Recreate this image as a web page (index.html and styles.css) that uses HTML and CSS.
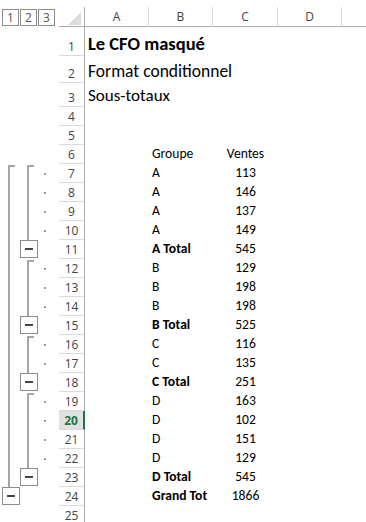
FILE: index.html
```html
<!DOCTYPE html>
<html lang="fr">
<head>
    <meta charset="UTF-8" />
    <title>Sous-totaux</title>
    <link rel="stylesheet" href="styles.css">
</head>
<body>

    <div class="sheet">
        <div class="header">
            <div class="levels">
                <span class="level">1</span>
                <span class="level">2</span>
                <span class="level">3</span>
            </div>
            <div class="corner"><i class="corner-mark"></i></div>
            <div class="colhead">A</div>
            <div class="colhead">B</div>
            <div class="colhead">C</div>
            <div class="colhead">D</div>
            <div class="colhead last"></div>
        </div>

        <div class="row row-1">
            <div class="gutter"></div>
            <div class="rowhead">1</div>
            <div class="cell title">Le CFO masqué</div>
            <div class="cell"></div><div class="cell"></div><div class="cell"></div><div class="cell"></div>
        </div>
        <div class="row row-2">
            <div class="gutter"></div>
            <div class="rowhead">2</div>
            <div class="cell subtitle">Format conditionnel</div>
            <div class="cell"></div><div class="cell"></div><div class="cell"></div><div class="cell"></div>
        </div>
        <div class="row row-3">
            <div class="gutter"></div>
            <div class="rowhead">3</div>
            <div class="cell caption">Sous-totaux</div>
            <div class="cell"></div><div class="cell"></div><div class="cell"></div><div class="cell"></div>
        </div>
        <div class="row">
            <div class="gutter"></div>
            <div class="rowhead">4</div>
            <div class="cell"></div><div class="cell"></div><div class="cell"></div><div class="cell"></div><div class="cell"></div>
        </div>
        <div class="row">
            <div class="gutter"></div>
            <div class="rowhead">5</div>
            <div class="cell"></div><div class="cell"></div><div class="cell"></div><div class="cell"></div><div class="cell"></div>
        </div>
        <div class="row">
            <div class="gutter"></div>
            <div class="rowhead">6</div>
            <div class="cell"></div>
            <div class="cell">Groupe</div>
            <div class="cell num">Ventes</div>
            <div class="cell"></div><div class="cell"></div>
        </div>

        <!-- groupe A -->
        <div class="row">
            <div class="gutter">
                <div class="lane"><i class="bracket"></i></div>
                <div class="lane lane-2"><i class="bracket"></i></div>
                <div class="lane"><i class="dot"></i></div>
            </div>
            <div class="rowhead">7</div>
            <div class="cell"></div>
            <div class="cell">A</div>
            <div class="cell num">113</div>
            <div class="cell"></div><div class="cell"></div>
        </div>
        <div class="row">
            <div class="gutter">
                <div class="lane"><i class="line"></i></div>
                <div class="lane lane-2"><i class="line"></i></div>
                <div class="lane"><i class="dot"></i></div>
            </div>
            <div class="rowhead">8</div>
            <div class="cell"></div>
            <div class="cell">A</div>
            <div class="cell num">146</div>
            <div class="cell"></div><div class="cell"></div>
        </div>
        <div class="row">
            <div class="gutter">
                <div class="lane"><i class="line"></i></div>
                <div class="lane lane-2"><i class="line"></i></div>
                <div class="lane"><i class="dot"></i></div>
            </div>
            <div class="rowhead">9</div>
            <div class="cell"></div>
            <div class="cell">A</div>
            <div class="cell num">137</div>
            <div class="cell"></div><div class="cell"></div>
        </div>
        <div class="row">
            <div class="gutter">
                <div class="lane"><i class="line"></i></div>
                <div class="lane lane-2"><i class="line"></i></div>
                <div class="lane"><i class="dot"></i></div>
            </div>
            <div class="rowhead">10</div>
            <div class="cell"></div>
            <div class="cell">A</div>
            <div class="cell num">149</div>
            <div class="cell"></div><div class="cell"></div>
        </div>
        <div class="row">
            <div class="gutter">
                <div class="lane"><i class="line"></i></div>
                <div class="lane lane-2"><i class="toggle"></i></div>
                <div class="lane"></div>
            </div>
            <div class="rowhead">11</div>
            <div class="cell"></div>
            <div class="cell total">A Total</div>
            <div class="cell num">545</div>
            <div class="cell"></div><div class="cell"></div>
        </div>

        <!-- groupe B -->
        <div class="row">
            <div class="gutter">
                <div class="lane"><i class="line"></i></div>
                <div class="lane lane-2"><i class="bracket"></i></div>
                <div class="lane"><i class="dot"></i></div>
            </div>
            <div class="rowhead">12</div>
            <div class="cell"></div>
            <div class="cell">B</div>
            <div class="cell num">129</div>
            <div class="cell"></div><div class="cell"></div>
        </div>
        <div class="row">
            <div class="gutter">
                <div class="lane"><i class="line"></i></div>
                <div class="lane lane-2"><i class="line"></i></div>
                <div class="lane"><i class="dot"></i></div>
            </div>
            <div class="rowhead">13</div>
            <div class="cell"></div>
            <div class="cell">B</div>
            <div class="cell num">198</div>
            <div class="cell"></div><div class="cell"></div>
        </div>
        <div class="row">
            <div class="gutter">
                <div class="lane"><i class="line"></i></div>
                <div class="lane lane-2"><i class="line"></i></div>
                <div class="lane"><i class="dot"></i></div>
            </div>
            <div class="rowhead">14</div>
            <div class="cell"></div>
            <div class="cell">B</div>
            <div class="cell num">198</div>
            <div class="cell"></div><div class="cell"></div>
        </div>
        <div class="row">
            <div class="gutter">
                <div class="lane"><i class="line"></i></div>
                <div class="lane lane-2"><i class="toggle"></i></div>
                <div class="lane"></div>
            </div>
            <div class="rowhead">15</div>
            <div class="cell"></div>
            <div class="cell total">B Total</div>
            <div class="cell num">525</div>
            <div class="cell"></div><div class="cell"></div>
        </div>

        <!-- groupe C -->
        <div class="row">
            <div class="gutter">
                <div class="lane"><i class="line"></i></div>
                <div class="lane lane-2"><i class="bracket"></i></div>
                <div class="lane"><i class="dot"></i></div>
            </div>
            <div class="rowhead">16</div>
            <div class="cell"></div>
            <div class="cell">C</div>
            <div class="cell num">116</div>
            <div class="cell"></div><div class="cell"></div>
        </div>
        <div class="row">
            <div class="gutter">
                <div class="lane"><i class="line"></i></div>
                <div class="lane lane-2"><i class="line"></i></div>
                <div class="lane"><i class="dot"></i></div>
            </div>
            <div class="rowhead">17</div>
            <div class="cell"></div>
            <div class="cell">C</div>
            <div class="cell num">135</div>
            <div class="cell"></div><div class="cell"></div>
        </div>
        <div class="row">
            <div class="gutter">
                <div class="lane"><i class="line"></i></div>
                <div class="lane lane-2"><i class="toggle"></i></div>
                <div class="lane"></div>
            </div>
            <div class="rowhead">18</div>
            <div class="cell"></div>
            <div class="cell total">C Total</div>
            <div class="cell num">251</div>
            <div class="cell"></div><div class="cell"></div>
        </div>

        <!-- groupe D -->
        <div class="row">
            <div class="gutter">
                <div class="lane"><i class="line"></i></div>
                <div class="lane lane-2"><i class="bracket"></i></div>
                <div class="lane"><i class="dot"></i></div>
            </div>
            <div class="rowhead">19</div>
            <div class="cell"></div>
            <div class="cell">D</div>
            <div class="cell num">163</div>
            <div class="cell"></div><div class="cell"></div>
        </div>
        <div class="row">
            <div class="gutter">
                <div class="lane"><i class="line"></i></div>
                <div class="lane lane-2"><i class="line"></i></div>
                <div class="lane"><i class="dot"></i></div>
            </div>
            <div class="rowhead selected">20</div>
            <div class="cell"></div>
            <div class="cell">D</div>
            <div class="cell num">102</div>
            <div class="cell"></div><div class="cell"></div>
        </div>
        <div class="row">
            <div class="gutter">
                <div class="lane"><i class="line"></i></div>
                <div class="lane lane-2"><i class="line"></i></div>
                <div class="lane"><i class="dot"></i></div>
            </div>
            <div class="rowhead">21</div>
            <div class="cell"></div>
            <div class="cell">D</div>
            <div class="cell num">151</div>
            <div class="cell"></div><div class="cell"></div>
        </div>
        <div class="row">
            <div class="gutter">
                <div class="lane"><i class="line"></i></div>
                <div class="lane lane-2"><i class="line"></i></div>
                <div class="lane"><i class="dot"></i></div>
            </div>
            <div class="rowhead">22</div>
            <div class="cell"></div>
            <div class="cell">D</div>
            <div class="cell num">129</div>
            <div class="cell"></div><div class="cell"></div>
        </div>
        <div class="row">
            <div class="gutter">
                <div class="lane"><i class="line"></i></div>
                <div class="lane lane-2"><i class="toggle"></i></div>
                <div class="lane"></div>
            </div>
            <div class="rowhead">23</div>
            <div class="cell"></div>
            <div class="cell total">D Total</div>
            <div class="cell num">545</div>
            <div class="cell"></div><div class="cell"></div>
        </div>

        <div class="row">
            <div class="gutter">
                <div class="lane"><i class="toggle"></i></div>
                <div class="lane lane-2"></div>
                <div class="lane"></div>
            </div>
            <div class="rowhead">24</div>
            <div class="cell"></div>
            <div class="cell total">Grand Tot</div>
            <div class="cell num">1866</div>
            <div class="cell"></div><div class="cell"></div>
        </div>
        <div class="row">
            <div class="gutter"></div>
            <div class="rowhead">25</div>
            <div class="cell"></div><div class="cell"></div><div class="cell"></div><div class="cell"></div><div class="cell"></div>
        </div>
    </div>

</body>
</html>
```

FILE: styles.css
```css
body {
    margin: 0;
    background-color: #fff;
    color: #000;
    font-family: Calibri, Lato, "Liberation Sans", sans-serif;
    overflow: hidden;
}

.header,
.row {
    display: grid;
    grid-template-columns: 59px 26px 64px 64px 65px 64px 1fr;
}

/* top strip: outline levels, corner, column letters */
.header {
    height: 27px;
}

.levels {
    display: flex;
    align-items: flex-end;
    gap: 1px;
    padding: 0 0 1px 2px;
}

.level {
    box-sizing: border-box;
    width: 17px;
    height: 17px;
    border: 1px solid #8c8c8c;
    font-family: "Open Sans", "Noto Sans", sans-serif;
    font-size: 12px;
    line-height: 15px;
    text-align: center;
    color: #555;
}

.corner {
    display: flex;
    justify-content: flex-end;
    align-items: flex-end;
    margin-top: 7px;
    padding: 0 3px 1px 0;
    border-right: 1px solid #ababab;
    border-bottom: 1px solid #ababab;
}

.corner-mark {
    width: 13px;
    height: 13px;
    background: #dcdcdc;
    clip-path: polygon(100% 0, 100% 100%, 0 100%);
}

.colhead {
    margin-top: 7px;
    border-right: 1px solid #d9d9d9;
    border-bottom: 1px solid #ababab;
    font-family: "Open Sans", "Noto Sans", sans-serif;
    font-size: 12px;
    line-height: 19px;
    text-align: center;
    color: #444;
}

.colhead.last {
    border-right: none;
}

/* rows */
.row {
    height: 19px;
}

.row-1 { height: 29px; }
.row-2 { height: 27px; }
.row-3 { height: 24px; }

.gutter {
    display: grid;
    grid-template-columns: 20px 18px 21px;
}

.lane {
    display: flex;
}

.line,
.bracket {
    box-sizing: border-box;
    margin-left: 8px;
    border-left: 2px solid #a6a6a6;
}

.lane-2 .line,
.lane-2 .bracket {
    margin-left: 7px;
}

.bracket {
    width: 7px;
    margin-top: 1px;
    border-top: 2px solid #a6a6a6;
}

.toggle {
    box-sizing: border-box;
    display: flex;
    align-items: center;
    justify-content: center;
    align-self: flex-start;
    width: 18px;
    height: 18px;
    margin-left: 2px;
    border: 1px solid #8c8c8c;
    background: #fff;
}

.lane-2 .toggle {
    margin-left: 0;
}

.toggle::before {
    content: "";
    width: 8px;
    height: 2px;
    background: #444;
}

.dot {
    align-self: center;
    width: 2px;
    height: 2px;
    margin-left: 6px;
    background: #9c9c9c;
}

.rowhead {
    box-sizing: border-box;
    display: flex;
    justify-content: center;
    align-items: flex-end;
    border-right: 1px solid #ababab;
    border-bottom: 1px solid #dadada;
    font-family: "Open Sans", "Noto Sans", sans-serif;
    font-size: 12px;
    color: #444;
}

.rowhead.selected {
    background: #e1e1e1;
    border-right: 2px solid #217346;
    color: #217346;
    font-weight: bold;
}

.cell {
    display: flex;
    align-items: flex-end;
    padding: 0 0 2px 3px;
    font-size: 13.6px;
    line-height: 16px;
    white-space: nowrap;
}

.cell.num {
    justify-content: center;
    padding-left: 0;
}

.cell.total {
    font-weight: bold;
}

.title {
    font-size: 18.5px;
    font-weight: bold;
    line-height: 22px;
    padding-bottom: 1px;
}

.subtitle {
    font-size: 17.5px;
    line-height: 21px;
    padding-bottom: 1px;
}

.caption {
    font-size: 17px;
    line-height: 20px;
    padding-bottom: 1px;
}
```
